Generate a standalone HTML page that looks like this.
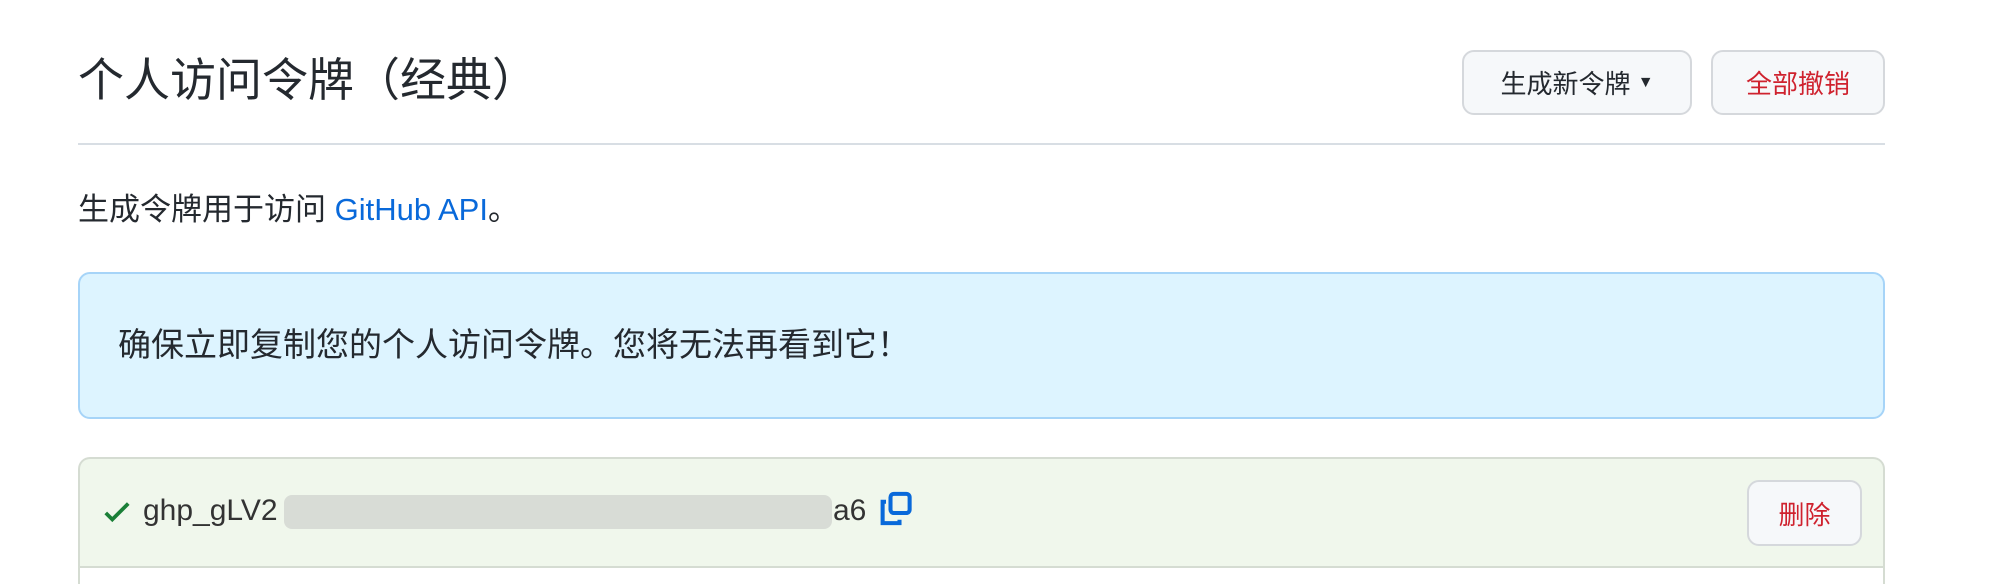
<!DOCTYPE html>
<html><head><meta charset="utf-8"><style>
html,body{margin:0;width:2000px;height:584px;overflow:hidden}
body{background:#fff;font-family:"Liberation Sans","Noto Sans CJK SC",sans-serif;position:relative;color:#24292f}
.abs{position:absolute}
.title{left:78px;top:50px;font-size:46px;line-height:60px;color:#24292f}
.hr{left:78px;top:143px;width:1807px;height:2px;background:#d8dee4}
.btn{border:2px solid #d5d8dc;border-radius:12px;background:#f6f8fa;font-size:26px;display:flex;align-items:center;justify-content:center;box-sizing:border-box}
.sub{left:78px;top:190px;font-size:31px;line-height:40px}
.blue{left:78px;top:272px;width:1807px;height:147px;background:#ddf4ff;border:2px solid #a6d4f8;border-radius:12px;box-sizing:border-box}
.green{left:78px;top:457px;width:1807px;height:127px;background:#f0f7ec;border:2px solid #d5dcd2;border-bottom:none;border-radius:12px 12px 0 0;box-sizing:border-box}
</style></head><body>
<div class="abs title">个人访问令牌（经典）</div>
<div class="abs btn" style="left:1462px;top:50px;width:230px;height:65px;color:#24292f">生成新令牌&nbsp;<span style="font-size:16px">▼</span></div>
<div class="abs btn" style="left:1711px;top:50px;width:174px;height:65px;color:#cf222e">全部撤销</div>
<div class="abs hr"></div>
<div class="abs sub">生成令牌用于访问 <span style="color:#0969da">GitHub API</span>。</div>
<div class="abs blue"></div>
<div class="abs" style="left:118px;top:324px;font-size:33px;line-height:42px;color:#24292f">确保立即复制您的个人访问令牌。您将无法再看到它！</div>
<div class="abs green"></div>
<div class="abs" style="left:80px;top:566px;width:1803px;height:2px;background:#d5dcd2"></div>
<div class="abs" style="left:80px;top:568px;width:1803px;height:16px;background:#fff"></div>
<svg class="abs" style="left:102px;top:497px" width="30" height="30" viewBox="0 0 16 16"><path d="M2 8.5l3.5 3.5L14 3.5" fill="none" stroke="#1a7f37" stroke-width="2"/></svg>
<div class="abs" style="left:143px;top:491px;font-size:30px;line-height:40px;color:#333">ghp_gLV2</div>
<div class="abs" style="left:284px;top:495px;width:548px;height:34px;background:#d8dcd6;border-radius:8px"></div>
<div class="abs" style="left:833px;top:491px;font-size:30px;line-height:40px;color:#333">a6</div>
<svg class="abs" style="left:877px;top:490px" width="36" height="37" viewBox="0 0 16 16"><rect x="6" y="1.5" width="8.5" height="8.5" rx="1.5" fill="none" stroke="#0969da" stroke-width="1.8"/><path d="M4 5H2.5v9.5H10V13" fill="none" stroke="#0969da" stroke-width="1.8"/></svg>
<div class="abs btn" style="left:1747px;top:480px;width:115px;height:66px;color:#cf222e">删除</div>
</body></html>
